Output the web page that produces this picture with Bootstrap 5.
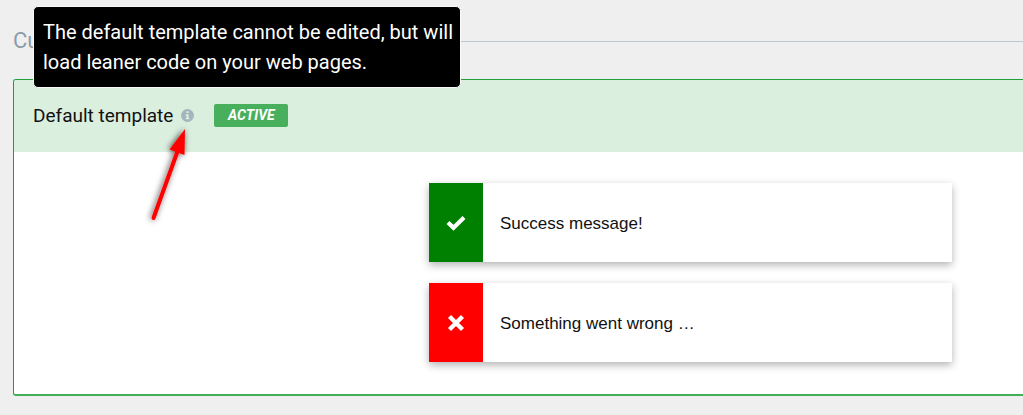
<!DOCTYPE html>
<html lang="en">
<head>
<meta charset="utf-8">
<meta name="viewport" content="width=device-width, initial-scale=1">
<title>Templates</title>
<link href="https://cdn.jsdelivr.net/npm/bootstrap@5.3.0/dist/css/bootstrap.min.css" rel="stylesheet">
<style>
  body { background: #efefef; color: #111; font-family: Roboto, sans-serif; overflow-x: hidden; }
  .page { padding: 26px 0 19px 13px; }
  .section-title { color: #8b9cab; font-size: 22px; line-height: 30px; font-weight: 400; }
  .section-rule { height: 1px; background: #bfc6cb; }
  .template-panel { margin-top: 23px; border: 1px solid #1f9e3a; border-right: 0; border-bottom: 2px solid #43b058; border-radius: 3px 0 0 3px; background: #fff; }
  .template-head { background: #dbefdf; padding: 0 19px 1px; height: 72px; border-radius: 2px 0 0 0; }
  .template-name { font-size: 19px; line-height: 30px; font-weight: 400; }
  .info-btn { width: 13px; height: 13px; margin-left: 8px; }
  .info-btn svg { display: block; }
  .status { margin-left: 20px; width: 74px; height: 23px; border-radius: 2px; background: #48b05c; color: #fff; font-size: 14px; line-height: 23px; font-weight: 700; font-style: italic; text-align: center; }
  .tip { left: 33px; top: 6px; width: 428px; padding: 10px 2px 10px 9px; border: 1px solid #fafafa; border-radius: 5px; background: #000; color: #fff; font-size: 20px; line-height: 30px; z-index: 2; }
  .pointer { left: 142px; top: 120px; z-index: 3; }
  .preview { padding: 31px 71px 32px 20px; gap: 21px; }
  .notice { width: 100%; max-width: 523px; height: 79px; background: #fff; box-shadow: 0 3px 8px rgba(0,0,0,.3); font-family: "Liberation Sans", Arial, sans-serif; font-size: 17px; line-height: 24px; }
  .notice-mark { width: 54px; }
  .is-ok { background: #008000; }
  .is-bad { background: #f00; }
  .notice-text { padding: 2px 0 0 17px; }
</style>
</head>
<body>
<main class="page">
  <div class="d-flex align-items-center">
    <h1 class="section-title m-0 pe-3">Cu</h1>
    <div class="section-rule flex-grow-1"></div>
  </div>
  <div id="tip" role="tooltip" class="tip position-absolute">The default template cannot be edited, but will load leaner code on your web pages.</div>

  <section class="template-panel">
    <div class="template-head d-flex align-items-center">
      <h2 class="template-name m-0">Default template</h2>
      <button type="button" class="info-btn btn p-0 border-0" aria-label="Info" aria-describedby="tip">
        <svg width="13" height="13" viewBox="0 0 12 12"><circle cx="6" cy="6" r="6" fill="#a6b4bc"/><path d="M5.1 2.1h1.9v1.6H5.1zM4.3 4.8h2.7v3.4h.8v1.3H4.3V8.200h.8V6.100h-.8z" fill="#dbefdf"/></svg>
      </button>
      <span class="status">ACTIVE</span>
    </div>
    <div class="preview d-flex flex-column align-items-end">
      <div class="notice d-flex">
        <div class="notice-mark is-ok d-flex align-items-center justify-content-center">
          <svg width="20" height="16" viewBox="0 0 20 16"><path d="M2 7.500 7.500 12.800 18 2.500" fill="none" stroke="#fff" stroke-width="4.200"/></svg>
        </div>
        <div class="notice-text align-self-center">Success message!</div>
      </div>
      <div class="notice d-flex">
        <div class="notice-mark is-bad d-flex align-items-center justify-content-center">
          <svg width="18" height="18" viewBox="0 0 18 18"><path d="M2.500 2.500 15.500 15.500M15.500 2.500 2.500 15.500" fill="none" stroke="#fff" stroke-width="4.300"/></svg>
        </div>
        <div class="notice-text align-self-center">Something went wrong …</div>
      </div>
    </div>
  </section>

  <svg class="pointer position-absolute" width="56" height="110" viewBox="0 0 56 110" aria-hidden="true">
    <defs><filter id="soft" x="-50%" y="-50%" width="200%" height="200%"><feDropShadow dx="-1" dy="0" stdDeviation="3" flood-color="#000" flood-opacity=".7"/></filter></defs>
    <g filter="url(#soft)">
      <path d="M11.500 98 36 30" stroke="#f00" stroke-width="4" stroke-linecap="round"/>
      <path d="M43 9 27.500 29.500 42.500 35z" fill="#f00"/>
    </g>
  </svg>
</main>
<script src="https://cdn.jsdelivr.net/npm/bootstrap@5.3.0/dist/js/bootstrap.bundle.min.js"></script>
</body>
</html>
